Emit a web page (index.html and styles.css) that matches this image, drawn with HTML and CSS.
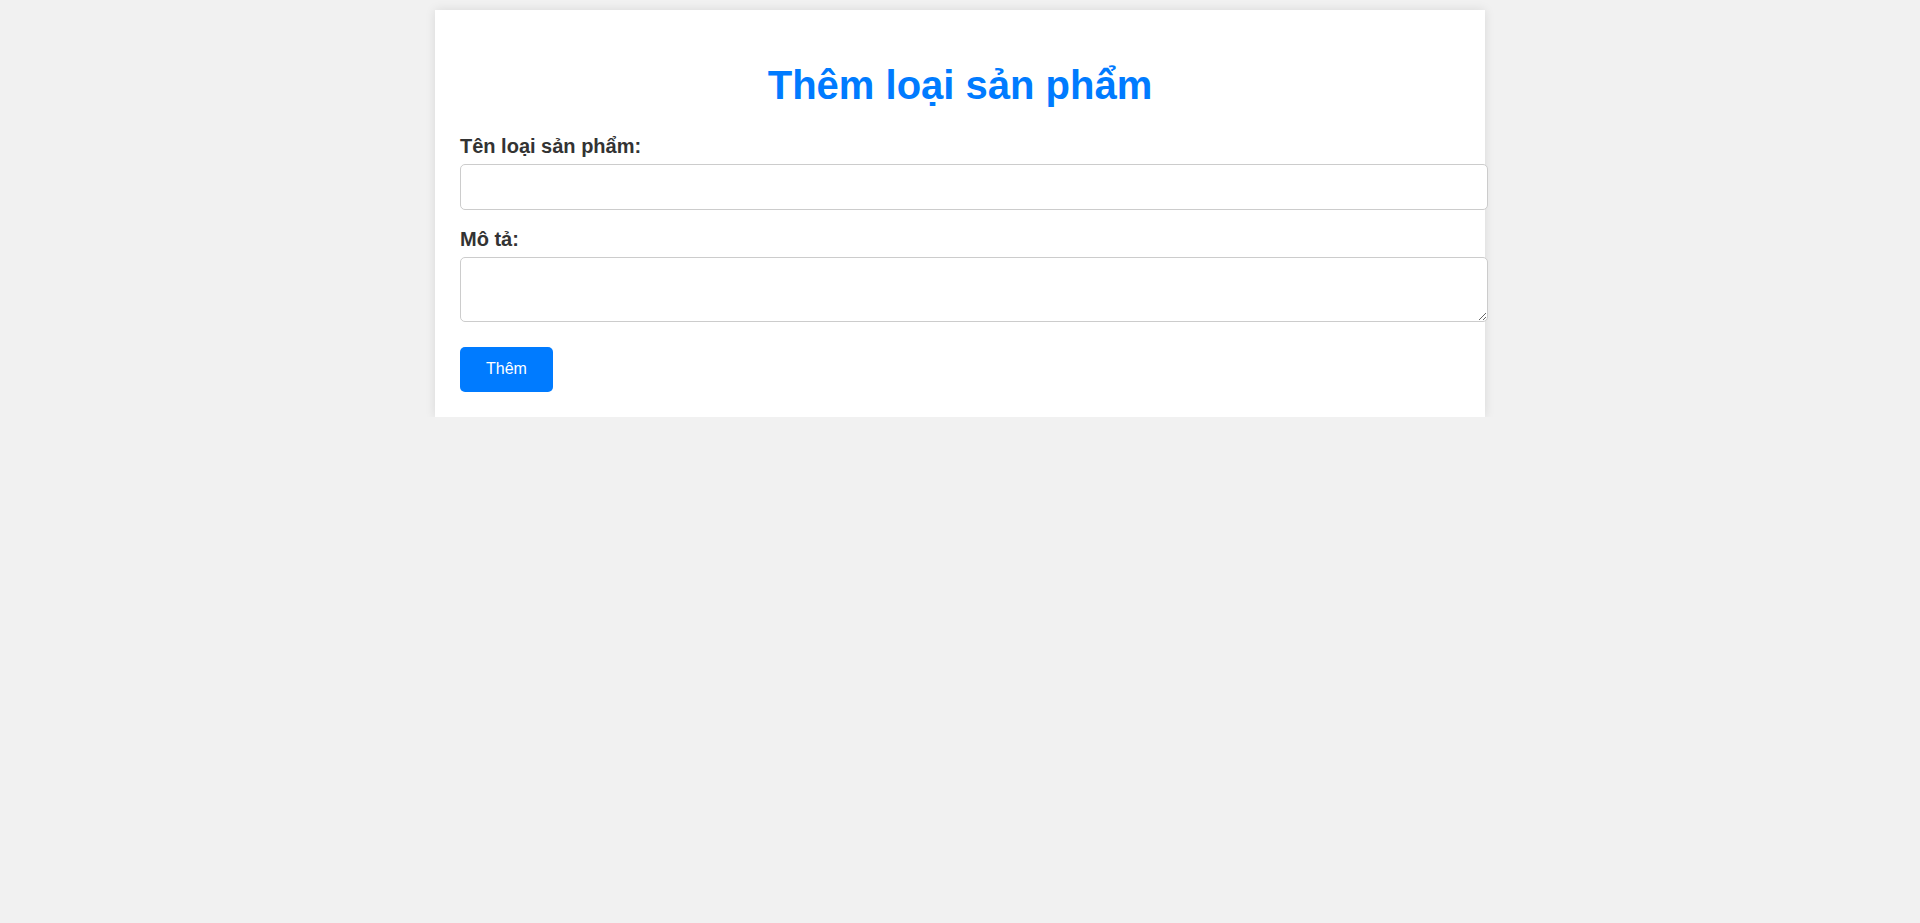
FILE: index.html
```html
<!DOCTYPE html>
<html lang="vi">
<head>
<meta charset="utf-8">
<title>Thêm loại sản phẩm</title>
<link rel="stylesheet" href="styles.css">
</head>
<body>
<div class="container">
  <h1 class="title">Thêm loại sản phẩm</h1>
  <form class="form">
    <div class="group">
      <label class="label" for="ten">Tên loại sản phẩm:</label>
      <input class="field" type="text" id="ten">
    </div>
    <div class="group">
      <label class="label" for="mota">Mô tả:</label>
      <textarea class="field area" id="mota" rows="2"></textarea>
    </div>
    <div class="actions">
      <button class="btn" type="button">Thêm</button>
    </div>
  </form>
</div>
</body>
</html>
```

FILE: styles.css
```css
html, body {
  margin: 0;
  padding: 0;
}
body {
  background: #f1f1f1;
  font-family: "Liberation Sans", Arial, sans-serif;
  color: #333;
  padding-top: 10px;
}
.container {
  box-sizing: border-box;
  width: 1050px;
  margin: 0 auto;
  background: #fff;
  padding: 25px 25px 25px;
  box-shadow: 0 0 10px rgba(0, 0, 0, 0.1);
}
.title {
  margin: 26.8px 0;
  font-size: 40px;
  line-height: 46px;
  font-weight: bold;
  text-align: center;
  color: #007bff;
}
.form {
  display: flex;
  flex-direction: column;
}
.group {
  display: flex;
  flex-direction: column;
  align-items: flex-start;
  margin-bottom: 18px;
}
.label {
  font-size: 20px;
  line-height: 23px;
  font-weight: bold;
  color: #333;
  margin-bottom: 6px;
}
.field {
  display: block;
  box-sizing: content-box;
  width: 1000px;
  padding: 12.8px;
  border: 1px solid #ccc;
  border-radius: 5px;
  font-family: "Liberation Sans", Arial, sans-serif;
  font-size: 16px;
  line-height: 18.4px;
  background: #fff;
  color: #333;
  margin: 0;
  outline: none;
}
.area {
  height: 37.4px;
  resize: vertical;
}
.actions {
  display: flex;
  padding-top: 7px;
}
.btn {
  background: #007bff;
  color: #fff;
  border: none;
  border-radius: 5px;
  padding: 13.3px 26px;
  font-family: "Liberation Sans", Arial, sans-serif;
  font-size: 16px;
  line-height: 18.4px;
  cursor: pointer;
}
```
